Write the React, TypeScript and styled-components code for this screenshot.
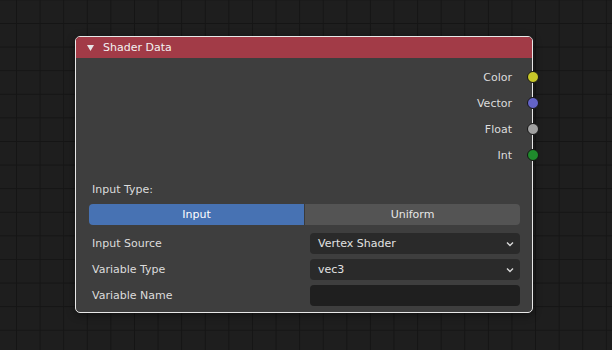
import React, { FC } from 'react'
import styled, { createGlobalStyle } from 'styled-components'

const GlobalStyle = createGlobalStyle`
	html, body {
		margin: 0;
		padding: 0;
		background: #1e1e1e;
	}
	body {
		font-family: 'DejaVu Sans', 'Liberation Sans', sans-serif;
		font-size: 11px;
		color: #dcdcdc;
	}
`

const Canvas = styled.div`
	width: 612px;
	height: 350px;
	box-sizing: border-box;
	padding: 36px 0 0 75px;
	background-color: #1e1e1e;
	background-image: linear-gradient(to right, #151515 1px, transparent 1px),
		linear-gradient(to bottom, #151515 1px, transparent 1px);
	background-size: 23.6px 23.6px;
	background-position: 16px 23px;
	overflow: hidden;
`

const Node = styled.div`
	position: relative;
	width: 458px;
	box-sizing: border-box;
	border: 1px solid #e8e8e8;
	border-radius: 5px;
	background: #3e3e3e;
	box-shadow: 0 2px 8px rgba(0, 0, 0, 0.45);
`

const Header = styled.div`
	height: 21px;
	display: flex;
	align-items: center;
	gap: 9px;
	padding-left: 11px;
	background: #a23b47;
	border-radius: 4px 4px 0 0;
	color: #f2f2f2;
	font-size: 11px;
`

const Body = styled.div`
	display: flex;
	flex-direction: column;
	padding: 6px 12px 6px 13px;
`

const OutputRow = styled.div`
	height: 26px;
	display: flex;
	align-items: center;
	justify-content: flex-end;
	padding-right: 8px;
	position: relative;
`

const Socket = styled.span<{ color: string }>`
	position: absolute;
	right: -19px;
	top: 50%;
	width: 10px;
	height: 10px;
	margin-top: -6px;
	border-radius: 50%;
	background: ${(p) => p.color};
	border: 1px solid #151515;
`

const SectionLabel = styled.div`
	height: 20px;
	display: flex;
	align-items: center;
	margin-top: 11px;
	padding-left: 3px;
`

const Segmented = styled.div`
	display: flex;
	height: 21px;
	margin-top: 5px;
	border-radius: 4px;
	overflow: hidden;
`

const Segment = styled.div<{ active?: boolean }>`
	flex: 1;
	display: flex;
	align-items: center;
	justify-content: center;
	background: ${(p) => (p.active ? '#4772b3' : '#545454')};
	color: ${(p) => (p.active ? '#ffffff' : '#e6e6e6')};
	& + & {
		border-left: 1px solid #3a3a3a;
	}
`

const PropRows = styled.div`
	display: flex;
	flex-direction: column;
	gap: 5px;
	margin-top: 8px;
`

const PropRow = styled.div`
	display: grid;
	grid-template-columns: 221px 1fr;
	height: 21px;
	align-items: center;
`

const PropLabel = styled.span`
	padding-left: 3px;
`

const Field = styled.div<{ dark?: boolean }>`
	height: 21px;
	display: flex;
	align-items: center;
	justify-content: space-between;
	padding: 0 6px 0 8px;
	border-radius: 4px;
	background: ${(p) => (p.dark ? '#1f1f1f' : '#2a2a2a')};
	color: #e2e2e2;
`

const Chevron: FC = () => (
	<svg width="8" height="6" viewBox="0 0 8 6">
		<polyline points="1,1.5 4,4.5 7,1.5" fill="none" stroke="#d8d8d8" strokeWidth="1.4" />
	</svg>
)

const Collapse: FC = () => (
	<svg width="7" height="6" viewBox="0 0 7 6">
		<polygon points="0,0 7,0 3.5,6" fill="#e6e6e6" />
	</svg>
)

const outputs = [
	{ name: 'Color', color: '#c7c729' },
	{ name: 'Vector', color: '#6363c7' },
	{ name: 'Float', color: '#a1a1a1' },
	{ name: 'Int', color: '#1f8a2c' },
]

const App: FC = () => (
	<>
		<GlobalStyle />
		<Canvas>
			<Node>
				<Header>
					<Collapse />
					Shader Data
				</Header>
				<Body>
					{outputs.map((o) => (
						<OutputRow key={o.name}>
							{o.name}
							<Socket color={o.color} />
						</OutputRow>
					))}
					<SectionLabel>Input Type:</SectionLabel>
					<Segmented>
						<Segment active>Input</Segment>
						<Segment>Uniform</Segment>
					</Segmented>
					<PropRows>
						<PropRow>
							<PropLabel>Input Source</PropLabel>
							<Field>
								Vertex Shader
								<Chevron />
							</Field>
						</PropRow>
						<PropRow>
							<PropLabel>Variable Type</PropLabel>
							<Field>
								vec3
								<Chevron />
							</Field>
						</PropRow>
						<PropRow>
							<PropLabel>Variable Name</PropLabel>
							<Field dark />
						</PropRow>
					</PropRows>
				</Body>
			</Node>
		</Canvas>
	</>
)

export default App
